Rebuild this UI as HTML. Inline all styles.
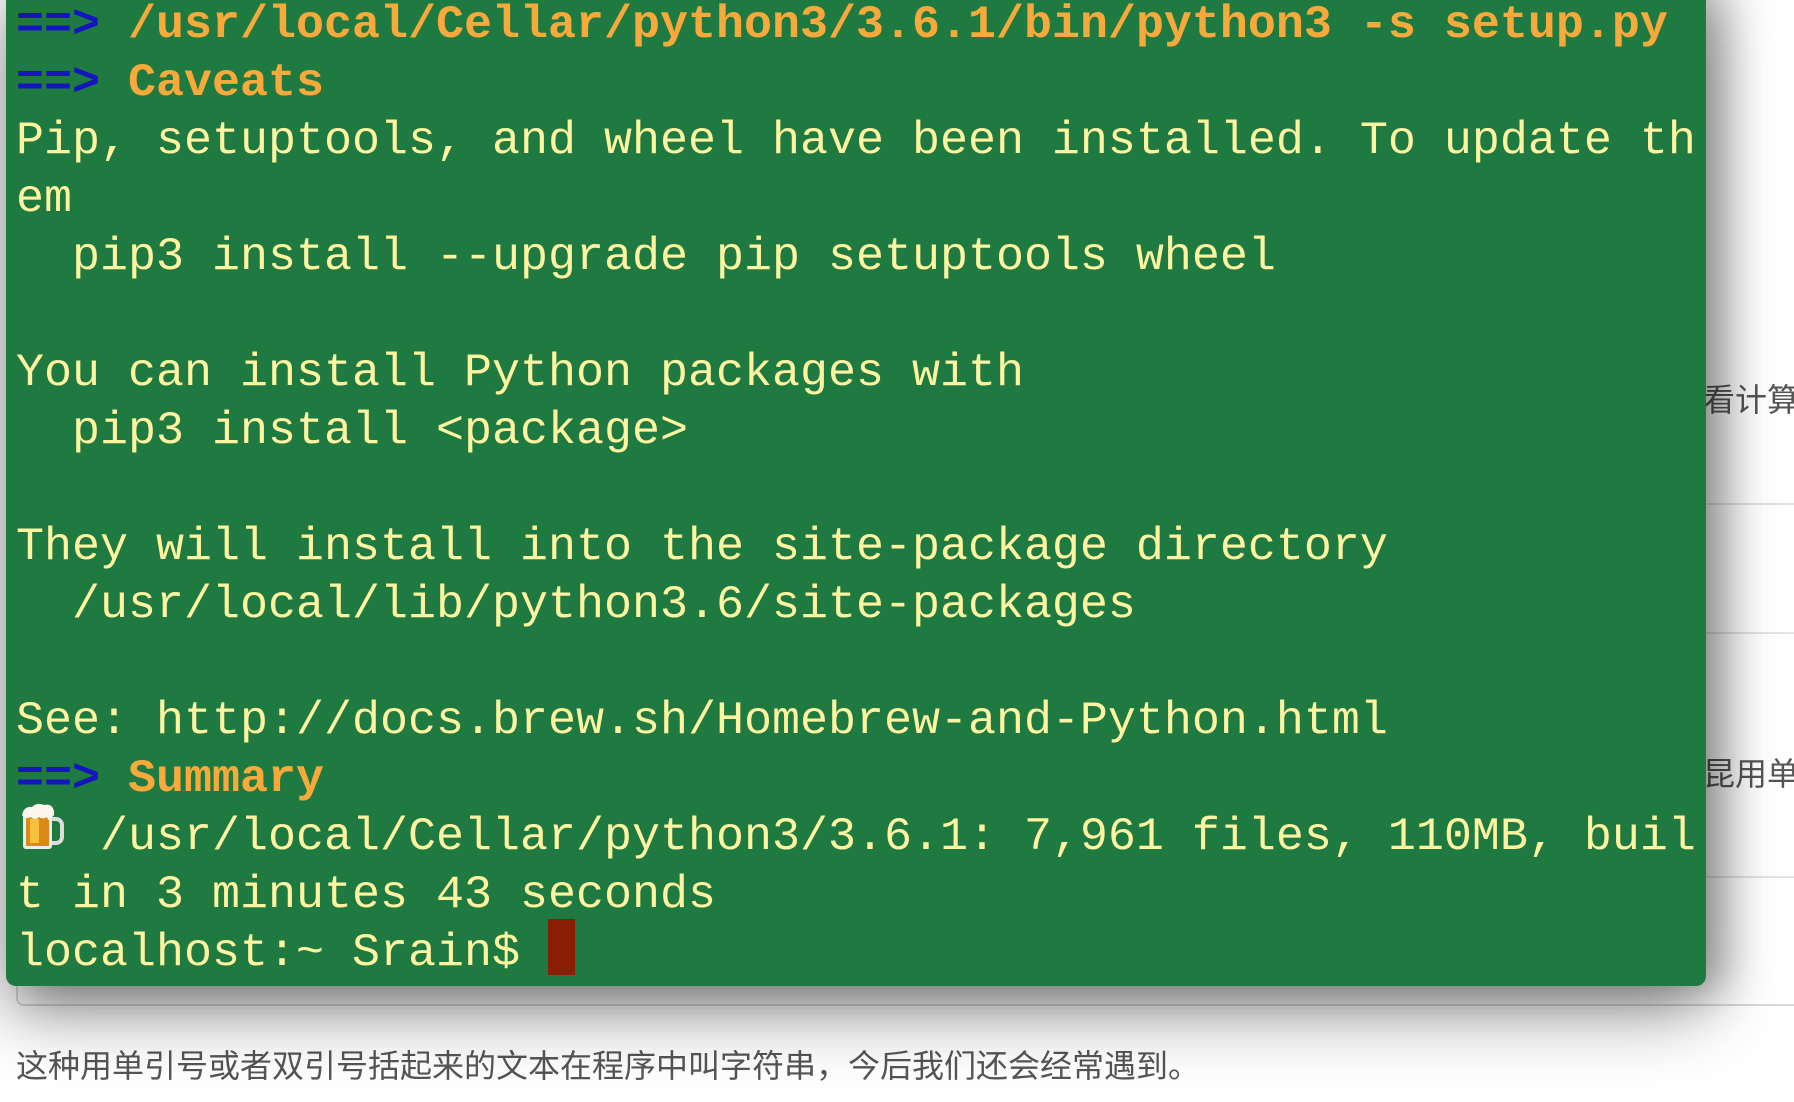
<!DOCTYPE html>
<html><head><meta charset="utf-8"><style>
html,body{margin:0;padding:0;width:1794px;height:1102px;overflow:hidden;background:#fff;position:relative;font-family:"Liberation Sans","Noto Sans CJK SC",sans-serif}
.hl{position:absolute;height:2px;background:#e3e3e3;left:1700px;right:0}
.box{position:absolute;left:16px;right:0;top:920px;height:84px;border-left:2px solid #d8d8d8;border-bottom:2px solid #d8d8d8;border-bottom-left-radius:8px}
.term{position:absolute;left:6px;top:-20px;width:1700px;height:1006px;background:#1e7a40;border-radius:0 0 10px 10px;box-shadow:0 25px 70px rgba(0,0,0,.45),20px 5px 40px rgba(0,0,0,.25)}
pre{position:absolute;left:16px;top:-3px;margin:0;font-family:"Liberation Mono",monospace;font-size:46.67px;line-height:58px;color:#fdf3a0;white-space:pre}
.b{color:#1414c0;font-weight:bold}
.o{color:#f7a93b;font-weight:bold}
.cur{position:absolute;left:548px;top:919px;width:27px;height:56px;background:#8a1e05}
.cn{position:absolute;font-size:32px;color:#555;white-space:nowrap}
</style></head><body>
<div class="hl" style="top:503px"></div>
<div class="hl" style="top:632px"></div>
<div class="hl" style="top:876px"></div>
<div class="box"></div>
<div class="cn" style="left:1703px;top:375px">看计算</div>
<div class="cn" style="left:1703px;top:749px">昆用单</div>
<div class="cn" style="left:16px;top:1041px">这种用单引号或者双引号括起来的文本在程序中叫字符串，今后我们还会经常遇到。</div>
<div class="term"></div>
<pre><span class="b">==&gt;</span> <span class="o">/usr/local/Cellar/python3/3.6.1/bin/python3 -s setup.py</span>
<span class="b">==&gt;</span> <span class="o">Caveats</span>
Pip, setuptools, and wheel have been installed. To update th
em
  pip3 install --upgrade pip setuptools wheel

You can install Python packages with
  pip3 install &lt;package&gt;

They will install into the site-package directory
  /usr/local/lib/python3.6/site-packages

See: http://docs.brew.sh/Homebrew-and-Python.html
<span class="b">==&gt;</span> <span class="o">Summary</span>
   /usr/local/Cellar/python3/3.6.1: 7,961 files, 110MB, buil
t in 3 minutes 43 seconds
localhost:~ Srain$ </pre>
<svg style="position:absolute;left:20px;top:803px" width="46" height="50" viewBox="0 0 46 50">
<path d="M30 16 h6 a6 6 0 0 1 6 6 v12 a6 6 0 0 1 -6 6 h-6" fill="none" stroke="#ddd" stroke-width="4"/>
<rect x="3" y="10" width="29" height="36" rx="3" fill="#e9eef0"/>
<rect x="6" y="12" width="23" height="31" fill="#d98a1a"/>
<rect x="10" y="16" width="9" height="24" fill="#f5c040"/>
<path d="M2 12 q2 -9 10 -8 q5 -5 12 -2 q8 -2 10 6 q1 6 -3 6 q-2 6 -4 0 q-4 3 -8 0 q-4 4 -8 0 q-6 3 -9 -2z" fill="#fbf7ee"/>
</svg>
<div class="cur"></div>
</body></html>
